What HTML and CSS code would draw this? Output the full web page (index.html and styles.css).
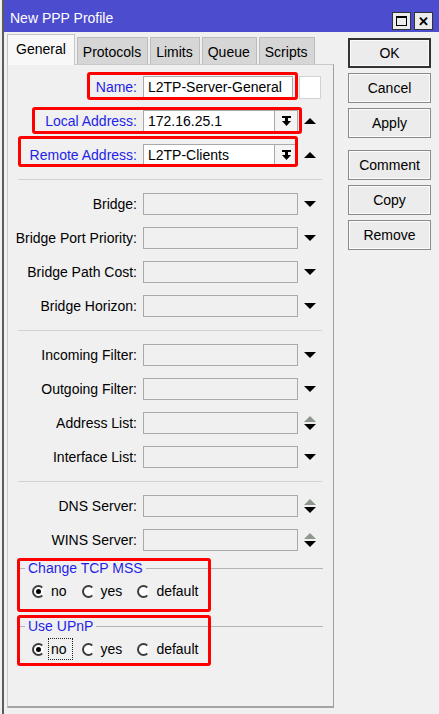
FILE: index.html
```html
<!DOCTYPE html>
<html lang="en">
<head>
    <meta charset="UTF-8">
    <title>New PPP Profile</title>
    <link rel="stylesheet" href="styles.css">
</head>
<body>
    <div class="window">
        <div class="titlebar">
            <span class="title">New PPP Profile</span>
            <div class="title-btns">
                <span class="tbtn"><span class="max-icon"></span></span>
                <span class="tbtn close">&#x2715;</span>
            </div>
        </div>

        <div class="frame">
            <div class="main">
                <div class="tabs">
                    <div class="tab active">General</div>
                    <div class="tab">Protocols</div>
                    <div class="tab">Limits</div>
                    <div class="tab">Queue</div>
                    <div class="tab">Scripts</div>
                </div>

                <div class="panel">
                    <div class="row">
                        <span class="lbl blue">Name:</span>
                        <div class="box filled name">L2TP-Server-General</div>
                        <div class="extra"></div>
                    </div>
                    <div class="row">
                        <span class="lbl blue">Local Address:</span>
                        <div class="box filled short">172.16.25.1</div>
                        <div class="ddbtn">
                            <svg width="9" height="10" viewBox="0 0 9 10"><rect x="0" y="0" width="9" height="2" fill="#000"/><rect x="3" y="2" width="3" height="3" fill="#000"/><polygon points="0,5 9,5 4.5,10" fill="#000"/></svg>
                        </div>
                        <svg class="arrow" width="12" height="8" viewBox="0 0 12 8"><polygon points="0,7 12,7 6,1" fill="#000"/></svg>
                    </div>
                    <div class="row">
                        <span class="lbl blue">Remote Address:</span>
                        <div class="box filled short">L2TP-Clients</div>
                        <div class="ddbtn">
                            <svg width="9" height="10" viewBox="0 0 9 10"><rect x="0" y="0" width="9" height="2" fill="#000"/><rect x="3" y="2" width="3" height="3" fill="#000"/><polygon points="0,5 9,5 4.5,10" fill="#000"/></svg>
                        </div>
                        <svg class="arrow" width="12" height="8" viewBox="0 0 12 8"><polygon points="0,7 12,7 6,1" fill="#000"/></svg>
                    </div>

                    <div class="sep"></div>

                    <div class="row">
                        <span class="lbl">Bridge:</span>
                        <div class="box"></div>
                        <svg class="arrow" width="12" height="8" viewBox="0 0 12 8"><polygon points="0,1 12,1 6,7" fill="#000"/></svg>
                    </div>
                    <div class="row">
                        <span class="lbl">Bridge Port Priority:</span>
                        <div class="box"></div>
                        <svg class="arrow" width="12" height="8" viewBox="0 0 12 8"><polygon points="0,1 12,1 6,7" fill="#000"/></svg>
                    </div>
                    <div class="row">
                        <span class="lbl">Bridge Path Cost:</span>
                        <div class="box"></div>
                        <svg class="arrow" width="12" height="8" viewBox="0 0 12 8"><polygon points="0,1 12,1 6,7" fill="#000"/></svg>
                    </div>
                    <div class="row">
                        <span class="lbl">Bridge Horizon:</span>
                        <div class="box"></div>
                        <svg class="arrow" width="12" height="8" viewBox="0 0 12 8"><polygon points="0,1 12,1 6,7" fill="#000"/></svg>
                    </div>

                    <div class="sep"></div>

                    <div class="row">
                        <span class="lbl">Incoming Filter:</span>
                        <div class="box"></div>
                        <svg class="arrow" width="12" height="8" viewBox="0 0 12 8"><polygon points="0,1 12,1 6,7" fill="#000"/></svg>
                    </div>
                    <div class="row">
                        <span class="lbl">Outgoing Filter:</span>
                        <div class="box"></div>
                        <svg class="arrow" width="12" height="8" viewBox="0 0 12 8"><polygon points="0,1 12,1 6,7" fill="#000"/></svg>
                    </div>
                    <div class="row">
                        <span class="lbl">Address List:</span>
                        <div class="box"></div>
                        <svg class="arrow" width="12" height="16" viewBox="0 0 12 16"><polygon points="0,7 12,7 6,1" fill="#8d978d"/><polygon points="0,9 12,9 6,15" fill="#000"/></svg>
                    </div>
                    <div class="row">
                        <span class="lbl">Interface List:</span>
                        <div class="box"></div>
                        <svg class="arrow" width="12" height="8" viewBox="0 0 12 8"><polygon points="0,1 12,1 6,7" fill="#000"/></svg>
                    </div>

                    <div class="sep"></div>

                    <div class="row">
                        <span class="lbl">DNS Server:</span>
                        <div class="box"></div>
                        <svg class="arrow" width="12" height="16" viewBox="0 0 12 16"><polygon points="0,7 12,7 6,1" fill="#8d978d"/><polygon points="0,9 12,9 6,15" fill="#000"/></svg>
                    </div>
                    <div class="row">
                        <span class="lbl">WINS Server:</span>
                        <div class="box"></div>
                        <svg class="arrow" width="12" height="16" viewBox="0 0 12 16"><polygon points="0,7 12,7 6,1" fill="#8d978d"/><polygon points="0,9 12,9 6,15" fill="#000"/></svg>
                    </div>

                    <div class="group-title">Change TCP MSS</div>
                    <div class="radios">
                        <span class="opt"><span class="radio checked"></span>no</span>
                        <span class="opt"><span class="radio"></span>yes</span>
                        <span class="opt"><span class="radio"></span>default</span>
                    </div>

                    <div class="group-title second">Use UPnP</div>
                    <div class="radios">
                        <span class="opt"><span class="radio checked"></span><span class="focus">no</span></span>
                        <span class="opt"><span class="radio"></span>yes</span>
                        <span class="opt"><span class="radio"></span>default</span>
                    </div>

                    <!-- red annotation frames -->
                    <div class="mark mark-name"></div>
                    <div class="mark mark-local"></div>
                    <div class="mark mark-remote"></div>
                    <div class="mark mark-mss"></div>
                    <div class="mark mark-upnp"></div>
                </div>
            </div>

            <div class="side">
                <div class="btn default">OK</div>
                <div class="btn">Cancel</div>
                <div class="btn">Apply</div>
                <div class="btn spaced">Comment</div>
                <div class="btn">Copy</div>
                <div class="btn">Remove</div>
            </div>
        </div>
    </div>
</body>
</html>
```

FILE: styles.css
```css
:root {
    --bg: #f0f0f0;
    --title-blue: #4c4cce;
    --label-blue: #1f1fe6;
    --field-border: #a9a9a9;
    --mark-red: #ff0000;
}

* {
    box-sizing: border-box;
}

body {
    margin: 0;
    background: var(--bg);
    font-family: "Liberation Sans", Arial, sans-serif;
    font-size: 14px;
    color: #000;
}

.window {
    margin-left: 2px;
    border-left: 2px solid #5c5c5c;
    height: 714px;
    display: flex;
    flex-direction: column;
}

/* title bar */

.titlebar {
    height: 32px;
    background: var(--title-blue);
    color: #fff;
    display: flex;
    align-items: center;
    padding: 4px 0 0 6px;
}

.title-btns {
    margin-left: auto;
    margin-right: 6px;
    margin-top: 6px;
    display: flex;
    gap: 3px;
}

.tbtn {
    width: 19px;
    height: 18px;
    background: #ececec;
    border: 1px solid #333;
    display: flex;
    align-items: center;
    justify-content: center;
    color: #000;
    font-size: 13px;
    font-weight: bold;
}

.max-icon {
    width: 11px;
    height: 10px;
    border: 1px solid #000;
    border-top-width: 2px;
}

/* tabs + panel */

.frame {
    flex: 1;
    display: flex;
    padding-left: 3px;
}

.main {
    width: 327px;
    display: flex;
    flex-direction: column;
}

.tabs {
    height: 32px;
    display: flex;
    align-items: flex-end;
    gap: 2px;
}

.tab {
    height: 27px;
    padding: 1px 6px 0 5px;
    background: #d6d6d6;
    border: 1px solid #bcbcbc;
    border-bottom: none;
    display: flex;
    align-items: center;
}

.tab.active {
    height: 31px;
    padding: 0 8px 2px;
    background: #f8f8f8;
    border-color: #c4c4c4;
    margin-bottom: -1px;
    position: relative;
    z-index: 1;
}

.panel {
    flex: 1;
    position: relative;
    margin-bottom: 6px;
    padding-top: 5px;
    border: 1px solid #c9c9c9;
    border-right: 1px solid #a0a0a0;
    border-bottom: 2px solid #a4a4a4;
}

.row {
    height: 34px;
    display: flex;
    align-items: center;
}

.lbl {
    width: 129px;
    margin-right: 6px;
    text-align: right;
    white-space: nowrap;
}

.lbl.blue {
    color: var(--label-blue);
}

.box {
    width: 155px;
    height: 22px;
    border: 1px solid var(--field-border);
    padding-left: 4px;
    line-height: 20px;
}

.box.filled {
    background: #fff;
}

.box.name {
    width: 150px;
}

.box.short {
    width: 132px;
}

.extra {
    width: 22px;
    height: 23px;
    margin-left: 6px;
    background: #fff;
    border: 1px solid #d2d2d2;
}

.ddbtn {
    width: 23px;
    height: 22px;
    border: 1px solid var(--field-border);
    border-left: none;
    background: #f4f4f4;
    display: flex;
    align-items: center;
    justify-content: center;
}

.arrow {
    margin-left: 6px;
}

.sep {
    margin: 7px 11px 7px 10px;
    border-top: 1px solid #d2d2d2;
}

/* radio groups */

.group-title {
    display: flex;
    align-items: center;
    height: 18px;
    margin: 2px 10px 0;
    color: var(--label-blue);
}

.group-title::before,
.group-title::after {
    content: "";
    border-top: 1px solid #b4b4b4;
}

.group-title::before {
    width: 7px;
    margin-right: 3px;
}

.group-title::after {
    flex: 1;
    margin-left: 3px;
}

.group-title.second {
    margin-top: 15px;
}

.radios {
    height: 22px;
    margin-top: 3px;
    padding-left: 24px;
    display: flex;
    align-items: center;
    gap: 15px;
}

.opt {
    display: flex;
    align-items: center;
    gap: 6px;
}

.radio {
    width: 13px;
    height: 13px;
    border-radius: 50%;
    border: 2px solid;
    border-color: #3c3c3c #f4f4f4 #3c3c3c #3c3c3c;
    background: #fff;
    display: flex;
    align-items: center;
    justify-content: center;
}

.radio.checked::after {
    content: "";
    width: 5px;
    height: 5px;
    border-radius: 50%;
    background: #000;
}

.focus {
    outline: 1px dotted #222;
    outline-offset: 2px;
    padding-right: 3px;
    margin-right: -3px;
}

/* red annotation frames over the form */

.mark {
    position: absolute;
    border: 3px solid var(--mark-red);
    border-radius: 3px;
    pointer-events: none;
}

.mark-name   { left: 79px; top: 7px;   width: 211px; height: 28px; }
.mark-local  { left: 24px; top: 42px;  width: 270px; height: 27px; }
.mark-remote { left: 10px; top: 71px;  width: 280px; height: 31px; }
.mark-mss    { left: 9px;  top: 493px; width: 194px; height: 54px; }
.mark-upnp   { left: 9px;  top: 550px; width: 194px; height: 51px; }

/* side buttons */

.side {
    margin-left: 14px;
    padding-top: 6px;
    display: flex;
    flex-direction: column;
    gap: 5px;
}

.btn {
    width: 83px;
    height: 30px;
    border: 1px solid #8a8a8a;
    background: #ececec;
    box-shadow: inset 0 0 0 1px #fbfbfb;
    display: flex;
    align-items: center;
    justify-content: center;
}

.btn.default {
    border: 2px solid #333;
}

.btn.spaced {
    margin-top: 7px;
}
```
